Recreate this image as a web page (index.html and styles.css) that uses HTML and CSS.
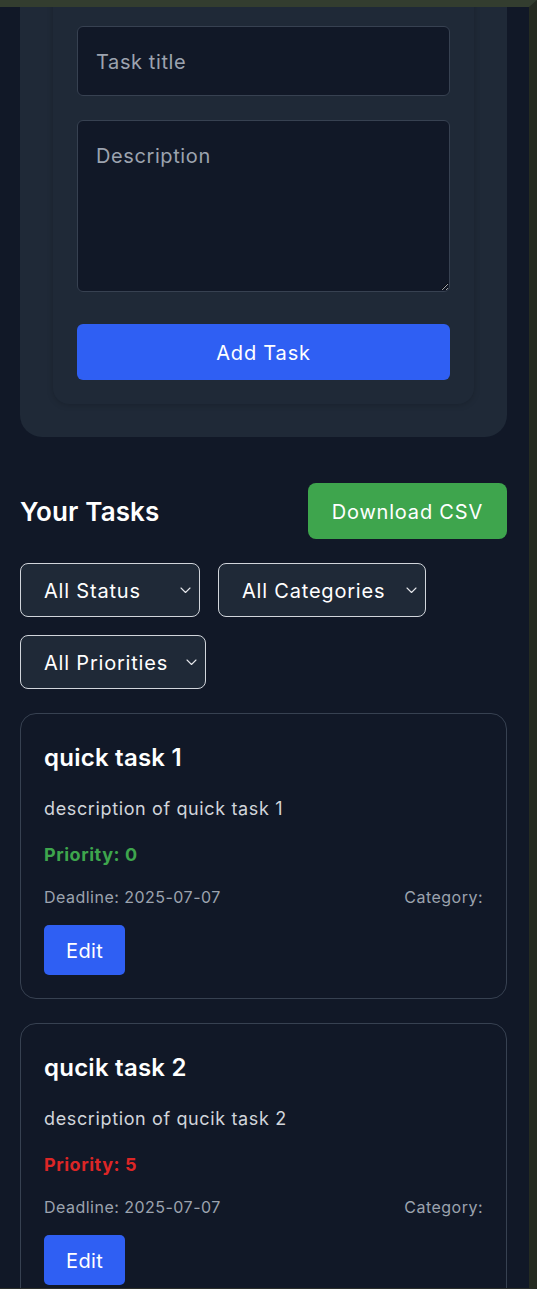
FILE: index.html
```html
<!DOCTYPE html>
<html lang="en">
<head>
<meta charset="utf-8">
<title>Tasks</title>
<link rel="stylesheet" href="styles.css">
</head>
<body>
<div class="viewport">
  <main class="app">
    <section class="form-panel">
      <form class="form-card">
        <input class="field field-title" type="text" placeholder="Task title">
        <textarea class="field field-desc" placeholder="Description"></textarea>
        <button type="button" class="btn btn-primary btn-add">Add Task</button>
      </form>
    </section>

    <section class="tasks">
      <div class="tasks-head">
        <h2 class="tasks-title">Your Tasks</h2>
        <button type="button" class="btn btn-green">Download CSV</button>
      </div>

      <div class="filters">
        <label class="filter filter-status">
          <select class="filter-select"><option>All Status</option></select>
          <svg class="chev" viewBox="0 0 11 7" width="11" height="7"><path d="M1 1l4.5 4.5L10 1" fill="none" stroke="#e5e7eb" stroke-width="1.1" stroke-linecap="round" stroke-linejoin="round"/></svg>
        </label>
        <label class="filter filter-cat">
          <select class="filter-select"><option>All Categories</option></select>
          <svg class="chev" viewBox="0 0 11 7" width="11" height="7"><path d="M1 1l4.5 4.5L10 1" fill="none" stroke="#e5e7eb" stroke-width="1.1" stroke-linecap="round" stroke-linejoin="round"/></svg>
        </label>
        <label class="filter filter-prio">
          <select class="filter-select"><option>All Priorities</option></select>
          <svg class="chev" viewBox="0 0 11 7" width="11" height="7"><path d="M1 1l4.5 4.5L10 1" fill="none" stroke="#e5e7eb" stroke-width="1.1" stroke-linecap="round" stroke-linejoin="round"/></svg>
        </label>
      </div>

      <article class="task">
        <h3 class="task-title">quick task 1</h3>
        <p class="task-desc">description of quick task 1</p>
        <p class="task-prio prio-low">Priority: 0</p>
        <div class="task-meta">
          <span>Deadline: 2025-07-07</span>
          <span>Category:</span>
        </div>
        <button type="button" class="btn btn-primary btn-edit">Edit</button>
      </article>

      <article class="task">
        <h3 class="task-title">qucik task 2</h3>
        <p class="task-desc">description of qucik task 2</p>
        <p class="task-prio prio-high">Priority: 5</p>
        <div class="task-meta">
          <span>Deadline: 2025-07-07</span>
          <span>Category:</span>
        </div>
        <button type="button" class="btn btn-primary btn-edit">Edit</button>
      </article>
    </section>
  </main>
</div>
</body>
</html>
```

FILE: styles.css
```css
* { box-sizing: border-box; }

html, body {
  margin: 0;
  padding: 0;
  height: 1289px;
  overflow: hidden;
  background: #111827;
}

body {
  font-family: Inter, "Noto Sans", "Liberation Sans", sans-serif;
  color: #ffffff;
}

.viewport {
  height: 1289px;
  overflow: hidden;
  border-top: 7px solid #333d2f;
  border-right: 8px solid #252b21;
  border-bottom: 1px solid #2a2d2a;
  background: #111827;
}

.app {
  padding: 0 22px 0 20px;
}

/* ---------- form ---------- */
.form-panel {
  margin-top: -60px;
  background: #1f2937;
  border-radius: 0 0 22px 22px;
  padding: 33px 33px 33px;
}

.form-card {
  margin: 0;
  background: #1f2937;
  border-radius: 16px;
  box-shadow: 0 1px 6px rgba(0, 0, 0, 0.18);
  padding: 46px 24px 24px;
  display: flex;
  flex-direction: column;
}

.field {
  display: block;
  width: 100%;
  background: #111827;
  border: 1px solid #374151;
  border-radius: 6px;
  color: #fff;
  font-family: inherit;
  font-size: 20px;
  letter-spacing: 0.03em;
  outline: none;
}

.field::placeholder { color: #9ca3af; }

.field-title {
  height: 70px;
  padding: 2px 18px 0;
}

.field-desc {
  margin-top: 24px;
  height: 172px;
  padding: 20px 18px;
  line-height: 30px;
  resize: vertical;
}

.btn {
  border: 0;
  color: #fff;
  font-family: inherit;
  letter-spacing: 0.04em;
  cursor: pointer;
}

.btn-primary { background: #2f5ff3; }

.btn-add {
  margin-top: 32px;
  height: 56px;
  border-radius: 6px;
  font-size: 20px;
  padding-top: 2px;
}

/* ---------- tasks ---------- */
.tasks-head {
  margin-top: 46px;
  display: flex;
  align-items: center;
  justify-content: space-between;
}

.tasks-title {
  margin: 0;
  font-size: 26px;
  font-weight: 600;
  letter-spacing: 0.005em;
}

.btn-green {
  background: #3ea54d;
  height: 56px;
  padding: 2px 24px 0;
  border-radius: 8px;
  font-size: 20px;
}

.filters {
  margin-top: 24px;
  display: flex;
  flex-wrap: wrap;
  gap: 18px;
  width: 420px;
}

.filter {
  position: relative;
  display: block;
  height: 54px;
}

.filter-status { width: 180px; }
.filter-cat { width: 208px; }
.filter-prio { width: 186px; }

.filter-select {
  appearance: none;
  -webkit-appearance: none;
  width: 100%;
  height: 100%;
  background: #1f2937;
  border: 1px solid #d1d5db;
  border-radius: 8px;
  color: #fff;
  font-family: inherit;
  font-size: 20px;
  letter-spacing: 0.04em;
  padding: 2px 30px 0 23px;
  outline: none;
}

.chev {
  position: absolute;
  right: 9px;
  top: 24px;
  pointer-events: none;
}

.task {
  margin-top: 24px;
  border: 1px solid #374151;
  border-radius: 16px;
  padding: 28px 23px 23px;
}

.task-title {
  margin: 0;
  font-size: 24px;
  line-height: 32px;
  font-weight: 600;
  letter-spacing: 0.01em;
}

.task-desc {
  margin: 21px 0 0;
  font-size: 18px;
  line-height: 28px;
  letter-spacing: 0.035em;
  color: #d1d5db;
}

.task-prio {
  margin: 18px 0 0;
  font-size: 18px;
  line-height: 28px;
  font-weight: 700;
  letter-spacing: 0.03em;
}

.prio-low { color: #3ea54d; }
.prio-high { color: #dc2626; }

.task-meta {
  margin-top: 17px;
  display: flex;
  justify-content: space-between;
  font-size: 16px;
  line-height: 22px;
  letter-spacing: 0.03em;
  color: #9ca3af;
}

.btn-edit {
  align-self: flex-start;
  margin-top: 17px;
  height: 50px;
  padding: 2px 22px 0;
  border-radius: 5px;
  font-size: 20px;
  letter-spacing: 0.02em;
}
```
